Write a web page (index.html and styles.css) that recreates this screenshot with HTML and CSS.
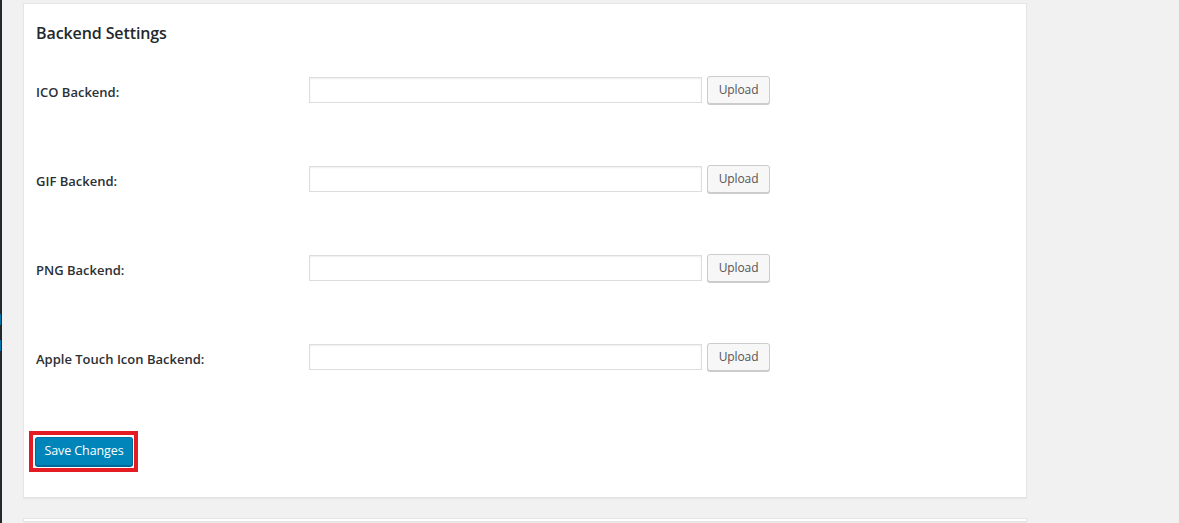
FILE: index.html
```html
<!DOCTYPE html>
<html>
<head>
<meta charset="utf-8">
<link rel="stylesheet" href="styles.css">
</head>
<body>
<div class="sidebar">
  <div class="sb-gap"></div>
  <div class="sb-blue"></div>
  <div class="sb-dark"></div>
  <div class="sb-blue"></div>
</div>
<div class="main">
  <div class="card">
    <h2 class="title">Backend Settings</h2>
    <div class="rows">
      <div class="row">
        <label class="label">ICO Backend:</label>
        <input class="field" type="text">
        <button class="btn-upload">Upload</button>
      </div>
      <div class="row">
        <label class="label">GIF Backend:</label>
        <input class="field" type="text">
        <button class="btn-upload">Upload</button>
      </div>
      <div class="row">
        <label class="label">PNG Backend:</label>
        <input class="field" type="text">
        <button class="btn-upload">Upload</button>
      </div>
      <div class="row">
        <label class="label">Apple Touch Icon Backend:</label>
        <input class="field" type="text">
        <button class="btn-upload">Upload</button>
      </div>
    </div>
    <div class="submit">
      <span class="highlight"><button class="btn-primary">Save Changes</button></span>
    </div>
  </div>
  <div class="card card-next"></div>
</div>
</body>
</html>
```

FILE: styles.css
```css
* { box-sizing: border-box; }
html, body { margin: 0; padding: 0; height: 523px; overflow: hidden; }
body {
  background: #f1f1f1;
  display: flex;
  font-family: "Open Sans", "Noto Sans", sans-serif;
  color: #23282d;
}
.sidebar {
  width: 2px;
  background: #23282d;
  display: flex;
  flex-direction: column;
  flex-shrink: 0;
}
.sb-gap { height: 314px; }
.sb-blue { height: 11px; width: 1px; background: #0073aa; }
.sb-dark { height: 15px; }
.main {
  flex: 1;
  height: 523px;
  overflow: hidden;
  padding: 3px 0 0 21px;
}
.card {
  width: 1004px;
  background: #fff;
  border: 1px solid #e5e5e5;
  box-shadow: 0 1px 1px rgba(0,0,0,.04);
  padding: 0 12px 25px 12px;
}
.card-next {
  margin-top: 20px;
  height: 4px;
  padding: 0;
}
.title {
  margin: 0;
  padding-top: 18px;
  font-size: 16px;
  line-height: 22px;
  font-weight: 600;
  letter-spacing: -0.1px;
  height: 72px;
}
.rows {
  display: flex;
  flex-direction: column;
  gap: 61px;
}
.row {
  display: flex;
  align-items: center;
  height: 28px;
}
.label {
  width: 273px;
  font-size: 13px;
  font-weight: 600;
  padding-top: 3px;
  color: #2b3035;
}
.field {
  width: 393px;
  height: 26px;
  margin: 0;
  border: 1px solid #ddd;
  box-shadow: inset 0 1px 2px rgba(0,0,0,.07);
  background: #fff;
  font: inherit;
}
.btn-upload {
  margin-left: 5px;
  width: 63px;
  height: 28px;
  background: #f7f7f7;
  border: 1px solid #ccc;
  border-radius: 3px;
  box-shadow: 0 1px 0 #ccc;
  color: #555;
  font-family: "Open Sans", "Noto Sans", sans-serif;
  font-size: 12px;
  padding: 0 0 2px;
  letter-spacing: -0.1px;
}
.submit {
  margin-top: 60px;
  display: flex;
}
.highlight {
  display: inline-flex;
  margin-left: -7px;
  border: 4px solid #e31b23;
  padding: 2px 1px 2px 2px;
}
.btn-primary {
  margin: 0;
  width: 98px;
  height: 29px;
  background: #0085ba;
  border: 1px solid;
  border-color: #0073aa #006799 #006799;
  border-radius: 3px;
  box-shadow: 0 1px 0 #006799;
  color: #fff;
  font-family: "Open Sans", "Noto Sans", sans-serif;
  font-size: 12.5px;
  letter-spacing: -0.1px;
  padding: 0 0 2px;
}
```
